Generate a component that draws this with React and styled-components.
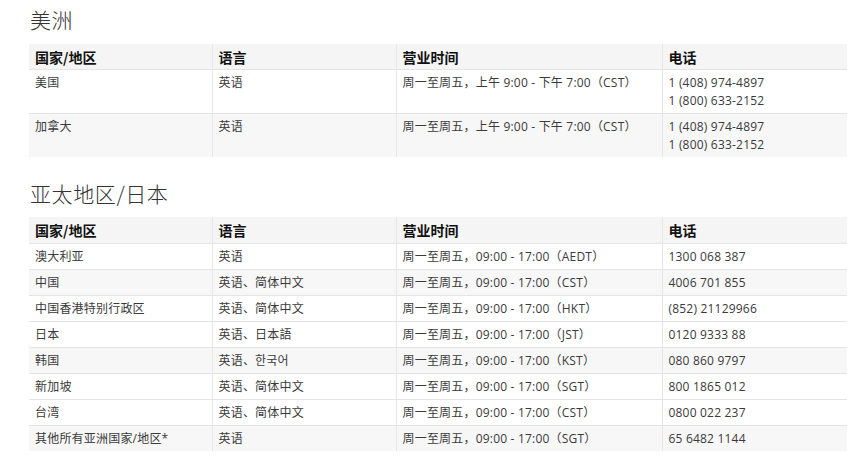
import React from "react";
import styled, { createGlobalStyle } from "styled-components";

const Global = createGlobalStyle`
  html, body { margin: 0; padding: 0; background: #fff; }
  body { font-family: "Open Sans", "Noto Sans CJK SC", sans-serif; color: #333; }
`;

const Page = styled.div`
  padding: 4px 18px 0 29px;
  width: 818px;
`;

const Heading = styled.h2`
  margin: ${(p) => (p.$first ? "0 0 10px 1px" : "21px 0 9px 1px")};
  font-family: "Noto Sans CJK SC", sans-serif;
  font-weight: 300;
  font-size: 21px;
  line-height: 30px;
  color: #333;
  letter-spacing: 0.6px;
`;

const Table = styled.table`
  width: 818px;
  border-collapse: collapse;
  table-layout: fixed;
`;

const HeadRow = styled.tr`
  background: #f5f5f5;
`;

const Th = styled.th`
  text-align: left;
  font-family: "Noto Sans CJK SC", sans-serif;
  font-weight: 700;
  font-size: 14px;
  line-height: 18px;
  color: #111;
  padding: 4px 6px ${(p) => (p.$tall ? "4px" : "3px")};
  border-left: 1px solid #e6e6e6;
  &:first-child { border-left: none; }
`;

const Row = styled.tr`
  background: ${(p) => (p.$shade ? "#f7f7f7" : "#fff")};
  border-top: 1px solid #e4e4e4;
`;

const Td = styled.td`
  vertical-align: top;
  font-size: 12px;
  line-height: 18px;
  letter-spacing: 0.2px;
  color: #3a3a3a;
  padding: 4px 6px 3px;
  border-left: 1px solid #e6e6e6;
  &:first-child { border-left: none; }
`;

const Line = styled.div``;

const cols = [183, 184, 266, 185];

const ColGroup = () => (
  <colgroup>
    {cols.map((w, i) => (
      <col key={i} style={{ width: w }} />
    ))}
  </colgroup>
);

const Head = ({ tall }) => (
  <thead>
    <HeadRow>
      {["国家/地区", "语言", "营业时间", "电话"].map((t) => (
        <Th key={t} $tall={tall}>
          {t}
        </Th>
      ))}
    </HeadRow>
  </thead>
);

const americas = [
  ["美国", "英语", "周一至周五，上午 9:00 - 下午 7:00（CST）", ["1 (408) 974-4897", "1 (800) 633-2152"], false],
  ["加拿大", "英语", "周一至周五，上午 9:00 - 下午 7:00（CST）", ["1 (408) 974-4897", "1 (800) 633-2152"], true],
];

const apac = [
  ["澳大利亚", "英语", "周一至周五，09:00 - 17:00（AEDT）", ["1300 068 387"], false],
  ["中国", "英语、简体中文", "周一至周五，09:00 - 17:00（CST）", ["4006 701 855"], true],
  ["中国香港特别行政区", "英语、简体中文", "周一至周五，09:00 - 17:00（HKT）", ["(852) 21129966"], false],
  ["日本", "英语、日本語", "周一至周五，09:00 - 17:00（JST）", ["0120 9333 88"], false],
  ["韩国", "英语、한국어", "周一至周五，09:00 - 17:00（KST）", ["080 860 9797"], true],
  ["新加坡", "英语、简体中文", "周一至周五，09:00 - 17:00（SGT）", ["800 1865 012"], false],
  ["台湾", "英语、简体中文", "周一至周五，09:00 - 17:00（CST）", ["0800 022 237"], false],
  ["其他所有亚洲国家/地区*", "英语", "周一至周五，09:00 - 17:00（SGT）", ["65 6482 1144"], true],
];

const Body = ({ rows }) => (
  <tbody>
    {rows.map(([c, l, h, phones, shade], i) => (
      <Row key={i} $shade={shade}>
        <Td>{c}</Td>
        <Td>{l}</Td>
        <Td>{h}</Td>
        <Td>
          {phones.map((p) => (
            <Line key={p}>{p}</Line>
          ))}
        </Td>
      </Row>
    ))}
  </tbody>
);

export default function App() {
  return (
    <Page>
      <Global />
      <Heading $first>美洲</Heading>
      <Table>
        <ColGroup />
        <Head />
        <Body rows={americas} />
      </Table>
      <Heading>亚太地区/日本</Heading>
      <Table>
        <ColGroup />
        <Head tall />
        <Body rows={apac} />
      </Table>
    </Page>
  );
}
